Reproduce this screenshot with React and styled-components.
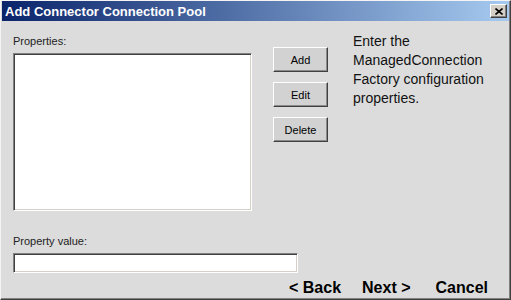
import React from "react";
import styled, { createGlobalStyle } from "styled-components";

const Global = createGlobalStyle`
  html, body { margin: 0; padding: 0; background: #dcdcdc; }
  * { box-sizing: border-box; }
`;

const Window = styled.div`
  width: 511px;
  height: 300px;
  display: flex;
  flex-direction: column;
  background: #dcdcdc;
  border-style: solid;
  border-width: 1px 1px 1px 1px;
  border-color: #f4f4f4 #404040 #404040 #f4f4f4;
  box-shadow: inset -1px -1px 0 #808080;
  font-family: "Liberation Sans", Arial, sans-serif;
`;

const TitleBar = styled.div`
  height: 20px;
  margin: 0 1px 0 1px;
  display: flex;
  align-items: center;
  justify-content: space-between;
  padding: 0 2px 0 3px;
  background: linear-gradient(to right, #0a246a, #a6caf0);
`;

const TitleText = styled.span`
  color: #ffffff;
  font-weight: bold;
  font-size: 13px;
  letter-spacing: 0;
`;

const CloseButton = styled.div`
  width: 17px;
  height: 14px;
  display: flex;
  align-items: center;
  justify-content: center;
  background: #d4d0c8;
  border-style: solid;
  border-width: 1px;
  border-color: #ffffff #404040 #404040 #ffffff;
  box-shadow: inset -1px -1px 0 #808080;
`;

const Body = styled.div`
  flex: 1;
  display: flex;
  flex-direction: column;
  padding: 11px 0 0 12px;
`;

const TopRow = styled.div`
  display: flex;
  align-items: flex-start;
`;

const LeftCol = styled.div`
  width: 239px;
  margin-top: 3px;
  display: flex;
  flex-direction: column;
`;

const Label = styled.div`
  font-size: 11px;
  line-height: 13px;
  color: #222;
  margin-bottom: 5px;
`;

const ListBox = styled.div`
  height: 158px;
  background: #ffffff;
  border-style: solid;
  border-width: 1px;
  border-color: #808080 #ffffff #ffffff #808080;
  box-shadow: inset 1px 1px 0 #404040, inset -1px -1px 0 #d4d0c8;
`;

const ButtonCol = styled.div`
  margin: 15px 0 0 21px;
  display: flex;
  flex-direction: column;
  gap: 10px;
`;

const Button = styled.div`
  width: 55px;
  height: 25px;
  display: flex;
  align-items: center;
  justify-content: center;
  font-size: 11px;
  color: #000;
  background: #d2d2d2;
  border-style: solid;
  border-width: 1px;
  border-color: #ffffff #404040 #404040 #ffffff;
  box-shadow: inset -1px -1px 0 #8a8a8a;
`;

const Description = styled.div`
  margin-left: 25px;
  font-size: 14px;
  line-height: 19px;
  color: #111;
`;

const ValueSection = styled.div`
  margin-top: 24px;
  display: flex;
  flex-direction: column;
`;

const TextField = styled.div`
  width: 285px;
  height: 20px;
  background: #ffffff;
  border-style: solid;
  border-width: 1px;
  border-color: #808080 #ffffff #ffffff #808080;
  box-shadow: inset 1px 1px 0 #404040, inset -1px -1px 0 #d4d0c8;
`;

const Nav = styled.div`
  margin-top: 6px;
  display: flex;
  justify-content: flex-end;
  padding-right: 22px;
  gap: 21px;
`;

const NavItem = styled.span`
  font-size: 16px;
  line-height: 18px;
  font-weight: ${(p) => (p.$bold ? "bold" : "normal")};
  color: #000;
  margin-left: ${(p) => p.$extra || 0}px;
`;

export default function App() {
  return (
    <>
      <Global />
      <Window>
        <TitleBar>
          <TitleText>Add Connector Connection Pool</TitleText>
          <CloseButton>
            <svg width="8" height="7" viewBox="0 0 8 7">
              <path d="M0.5 0.5 L7.5 6.5 M7.5 0.5 L0.5 6.5" stroke="#000" strokeWidth="1.6" />
            </svg>
          </CloseButton>
        </TitleBar>
        <Body>
          <TopRow>
            <LeftCol>
              <Label>Properties:</Label>
              <ListBox />
            </LeftCol>
            <ButtonCol>
              <Button>Add</Button>
              <Button>Edit</Button>
              <Button>Delete</Button>
            </ButtonCol>
            <Description>
              Enter the
              <br />
              ManagedConnection
              <br />
              Factory configuration
              <br />
              properties.
            </Description>
          </TopRow>
          <ValueSection>
            <Label>Property value:</Label>
            <TextField />
          </ValueSection>
          <Nav>
            <NavItem $bold>&lt; Back</NavItem>
            <NavItem $bold>Next &gt;</NavItem>
            <NavItem $bold $extra={4}>Cancel</NavItem>
          </Nav>
        </Body>
      </Window>
    </>
  );
}
